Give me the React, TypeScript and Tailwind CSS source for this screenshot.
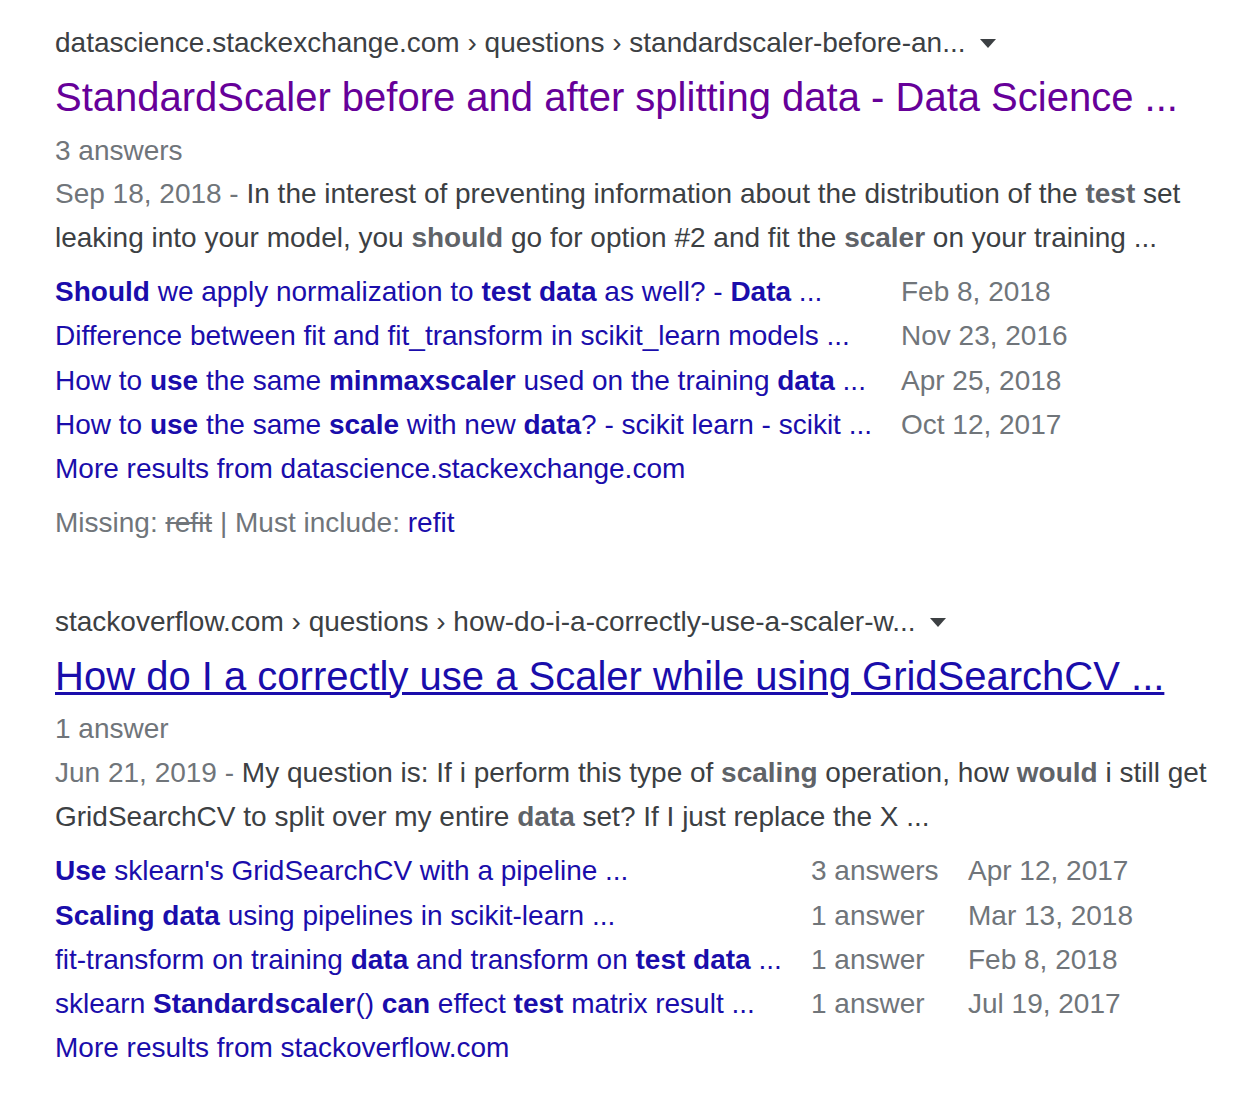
import React from "react";

const B = ({ children }: { children: React.ReactNode }) => <b className="font-bold">{children}</b>;
const S = ({ children }: { children: React.ReactNode }) => <b className="font-bold text-[#5f6368]">{children}</b>;

function Caret() {
  return (
    <svg width="16" height="9" viewBox="0 0 16 9" className="ml-[15px] inline-block">
      <path d="M0 0 L16 0 L8 9 Z" fill="#3c4043" />
    </svg>
  );
}

export default function App() {
  return (
    <div
      className="min-h-[1102px] w-[1242px] bg-white pl-[55px] pt-[21px]"
      style={{ fontFamily: '"Liberation Sans", Arial, sans-serif' }}
    >
      {/* Result 1 */}
      <div className="flex h-[44px] items-center text-[28px] text-[#3c4043]">
        <span>datascience.stackexchange.com › questions › standardscaler-before-an...</span>
        <Caret />
      </div>
      <div className="flex h-[64px] items-center whitespace-nowrap text-[40px] text-[#660099]">
        StandardScaler before and after splitting data - Data Science ...
      </div>
      <div className="h-[43px] text-[28px] leading-[43px] text-[#70757a]">3 answers</div>
      <div className="w-[1140px] text-[28px] leading-[44px] text-[#3c4043]">
        <span className="text-[#70757a]">Sep 18, 2018 - </span>In the interest of preventing information about the
        distribution of the <S>test</S> set leaking into your model, you <S>should</S> go for option #2 and fit the{" "}
        <S>scaler</S> on your training ...
      </div>
      <div className="mt-[10px] grid grid-cols-[846px_1fr] text-[28px] leading-[44.25px]">
        <div className="text-[#1a0dab]">
          <B>Should</B> we apply normalization to <B>test data</B> as well? - <B>Data</B> ...
        </div>
        <div className="text-[#70757a]">Feb 8, 2018</div>
        <div className="text-[#1a0dab]">Difference between fit and fit_transform in scikit_learn models ...</div>
        <div className="text-[#70757a]">Nov 23, 2016</div>
        <div className="text-[#1a0dab]">
          How to <B>use</B> the same <B>minmaxscaler</B> used on the training <B>data</B> ...
        </div>
        <div className="text-[#70757a]">Apr 25, 2018</div>
        <div className="text-[#1a0dab]">
          How to <B>use</B> the same <B>scale</B> with new <B>data</B>? - scikit learn - scikit ...
        </div>
        <div className="text-[#70757a]">Oct 12, 2017</div>
        <div className="col-span-2 text-[#1a0dab]">More results from datascience.stackexchange.com</div>
      </div>
      <div className="mt-[10px] text-[28px] leading-[44px] text-[#70757a]">
        Missing: <span className="line-through">refit</span> | Must include:{" "}
        <span className="text-[#1a0dab]">refit</span>
      </div>

      {/* Result 2 */}
      <div className="mt-[55px] flex h-[44px] items-center text-[28px] text-[#3c4043]">
        <span>stackoverflow.com › questions › how-do-i-a-correctly-use-a-scaler-w...</span>
        <Caret />
      </div>
      <div className="flex h-[63px] items-center whitespace-nowrap text-[40px] text-[#1a0dab]">
        <span className="underline decoration-[3px] underline-offset-[2px]">
          How do I a correctly use a Scaler while using GridSearchCV ...
        </span>
      </div>
      <div className="h-[44px] text-[28px] leading-[44px] text-[#70757a]">1 answer</div>
      <div className="w-[1160px] text-[28px] leading-[44px] text-[#3c4043]">
        <span className="text-[#70757a]">Jun 21, 2019 - </span>My question is: If i perform this type of{" "}
        <S>scaling</S> operation, how <S>would</S> i still get GridSearchCV to split over my entire <S>data</S> set? If
        I just replace the X ...
      </div>
      <div className="mt-[10px] grid grid-cols-[756px_157px_1fr] text-[28px] leading-[44.25px]">
        <div className="text-[#1a0dab]">
          <B>Use</B> sklearn's GridSearchCV with a pipeline ...
        </div>
        <div className="text-[#70757a]">3 answers</div>
        <div className="text-[#70757a]">Apr 12, 2017</div>
        <div className="text-[#1a0dab]">
          <B>Scaling data</B> using pipelines in scikit-learn ...
        </div>
        <div className="text-[#70757a]">1 answer</div>
        <div className="text-[#70757a]">Mar 13, 2018</div>
        <div className="text-[#1a0dab]">
          fit-transform on training <B>data</B> and transform on <B>test data</B> ...
        </div>
        <div className="text-[#70757a]">1 answer</div>
        <div className="text-[#70757a]">Feb 8, 2018</div>
        <div className="text-[#1a0dab]">
          sklearn <B>Standardscaler</B>() <B>can</B> effect <B>test</B> matrix result ...
        </div>
        <div className="text-[#70757a]">1 answer</div>
        <div className="text-[#70757a]">Jul 19, 2017</div>
        <div className="col-span-3 text-[#1a0dab]">More results from stackoverflow.com</div>
      </div>
    </div>
  );
}
